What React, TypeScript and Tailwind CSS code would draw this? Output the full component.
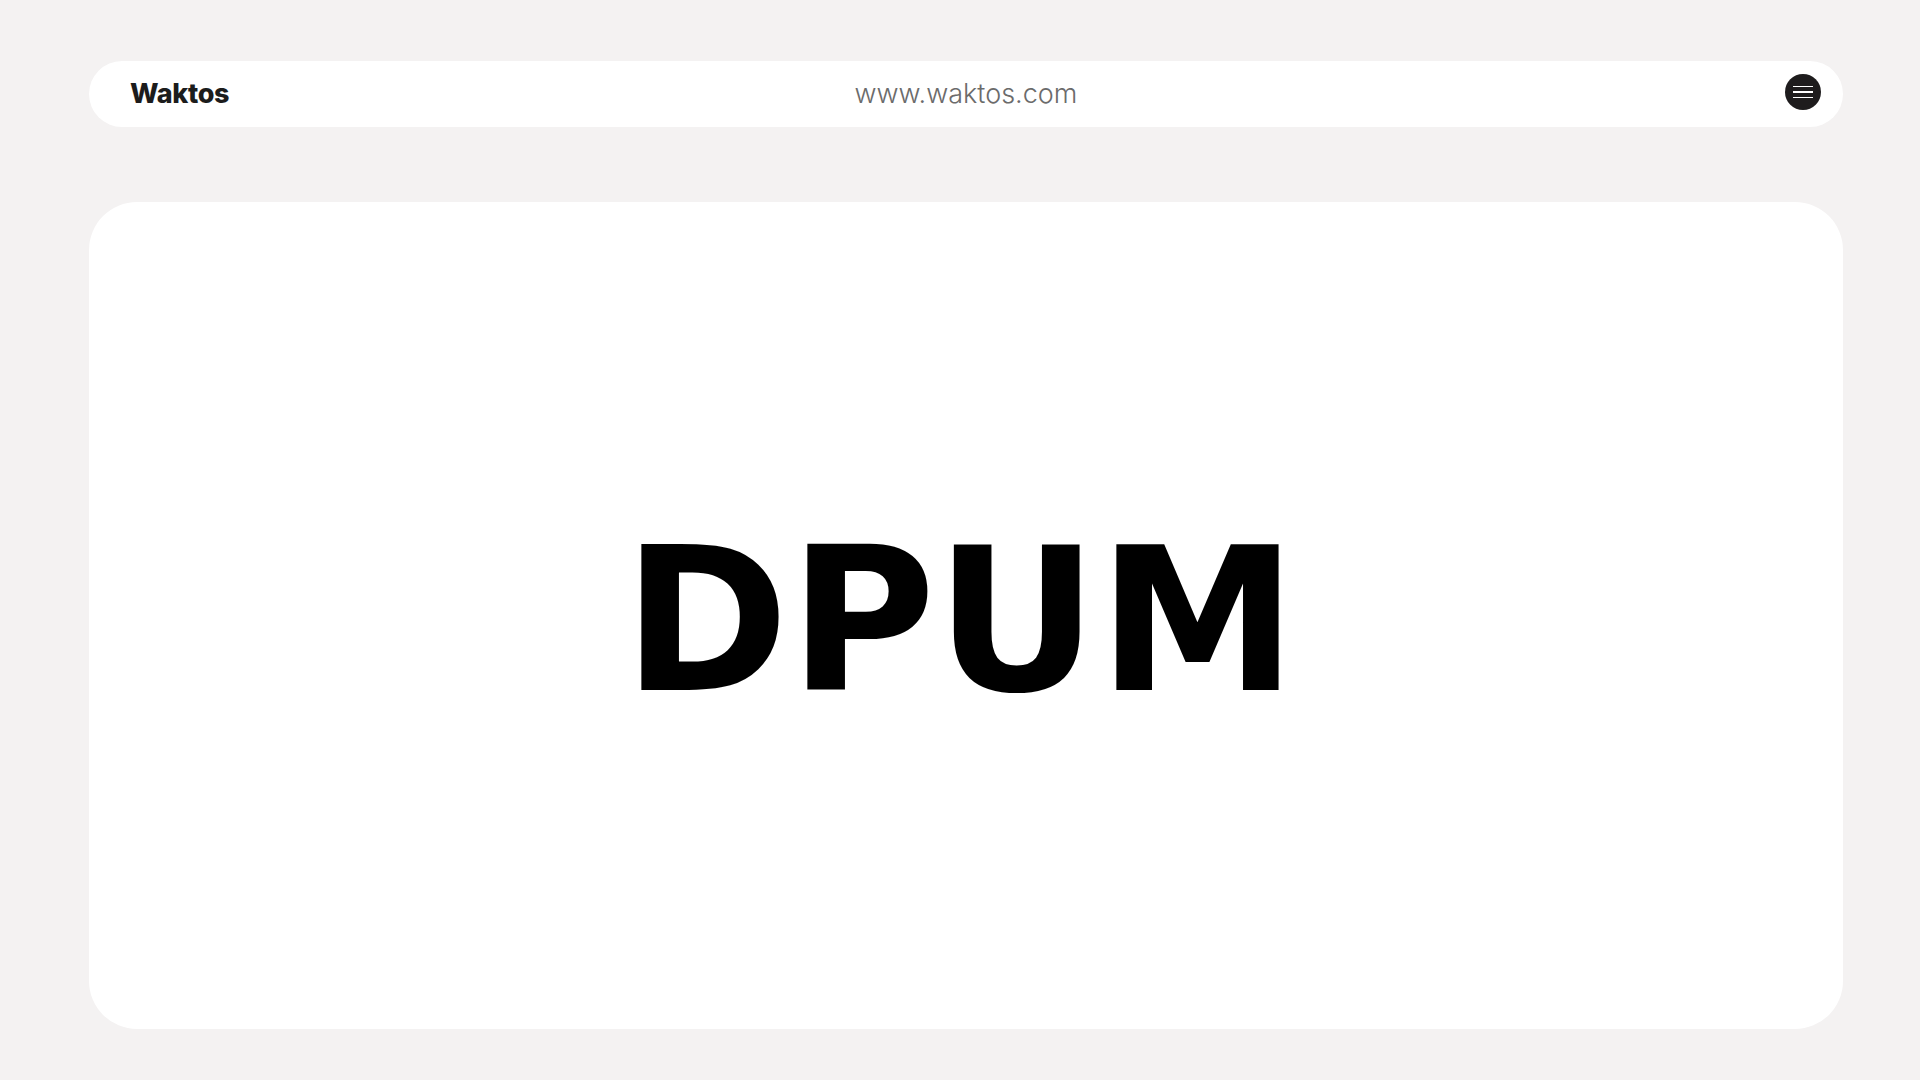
export default function App() {
  return (
    <div className="w-full h-[1080px] bg-[#f4f2f2] pl-[89px] pr-[77px] pt-[61px] pb-[51px] flex flex-col gap-[75px] overflow-hidden">
      <header className="h-[66px] bg-white rounded-full grid grid-cols-[1fr_auto_1fr] items-center px-[22px]">
        <div className="ml-[19px] text-[27px] font-extrabold text-[#1c1c1c] tracking-[-0.3px]" style={{ fontFamily: "Inter, 'Noto Sans', sans-serif" }}>
          Waktos
        </div>
        <div className="text-[27px] font-light text-[#6b6b6b]" style={{ fontFamily: "Inter, 'Noto Sans', sans-serif" }}>
          www.waktos.com
        </div>
        <div className="flex justify-end">
          <button className="w-9 h-9 rounded-full bg-[#1e1c1d] flex flex-col items-center justify-center gap-[4px] -mt-[4px]">
            <span className="block w-[20px] h-[1.5px] bg-white" />
            <span className="block w-[20px] h-[1.5px] bg-white" />
            <span className="block w-[20px] h-[1.5px] bg-white" />
          </button>
        </div>
      </header>
      <main className="flex-1 bg-white rounded-[48px] flex items-center justify-center pr-[12px] pt-[10px]">
        <h1 className="text-[200px] font-bold text-black leading-none" style={{ fontFamily: "'DejaVu Sans', sans-serif" }}>
          DPUM
        </h1>
      </main>
    </div>
  );
}
